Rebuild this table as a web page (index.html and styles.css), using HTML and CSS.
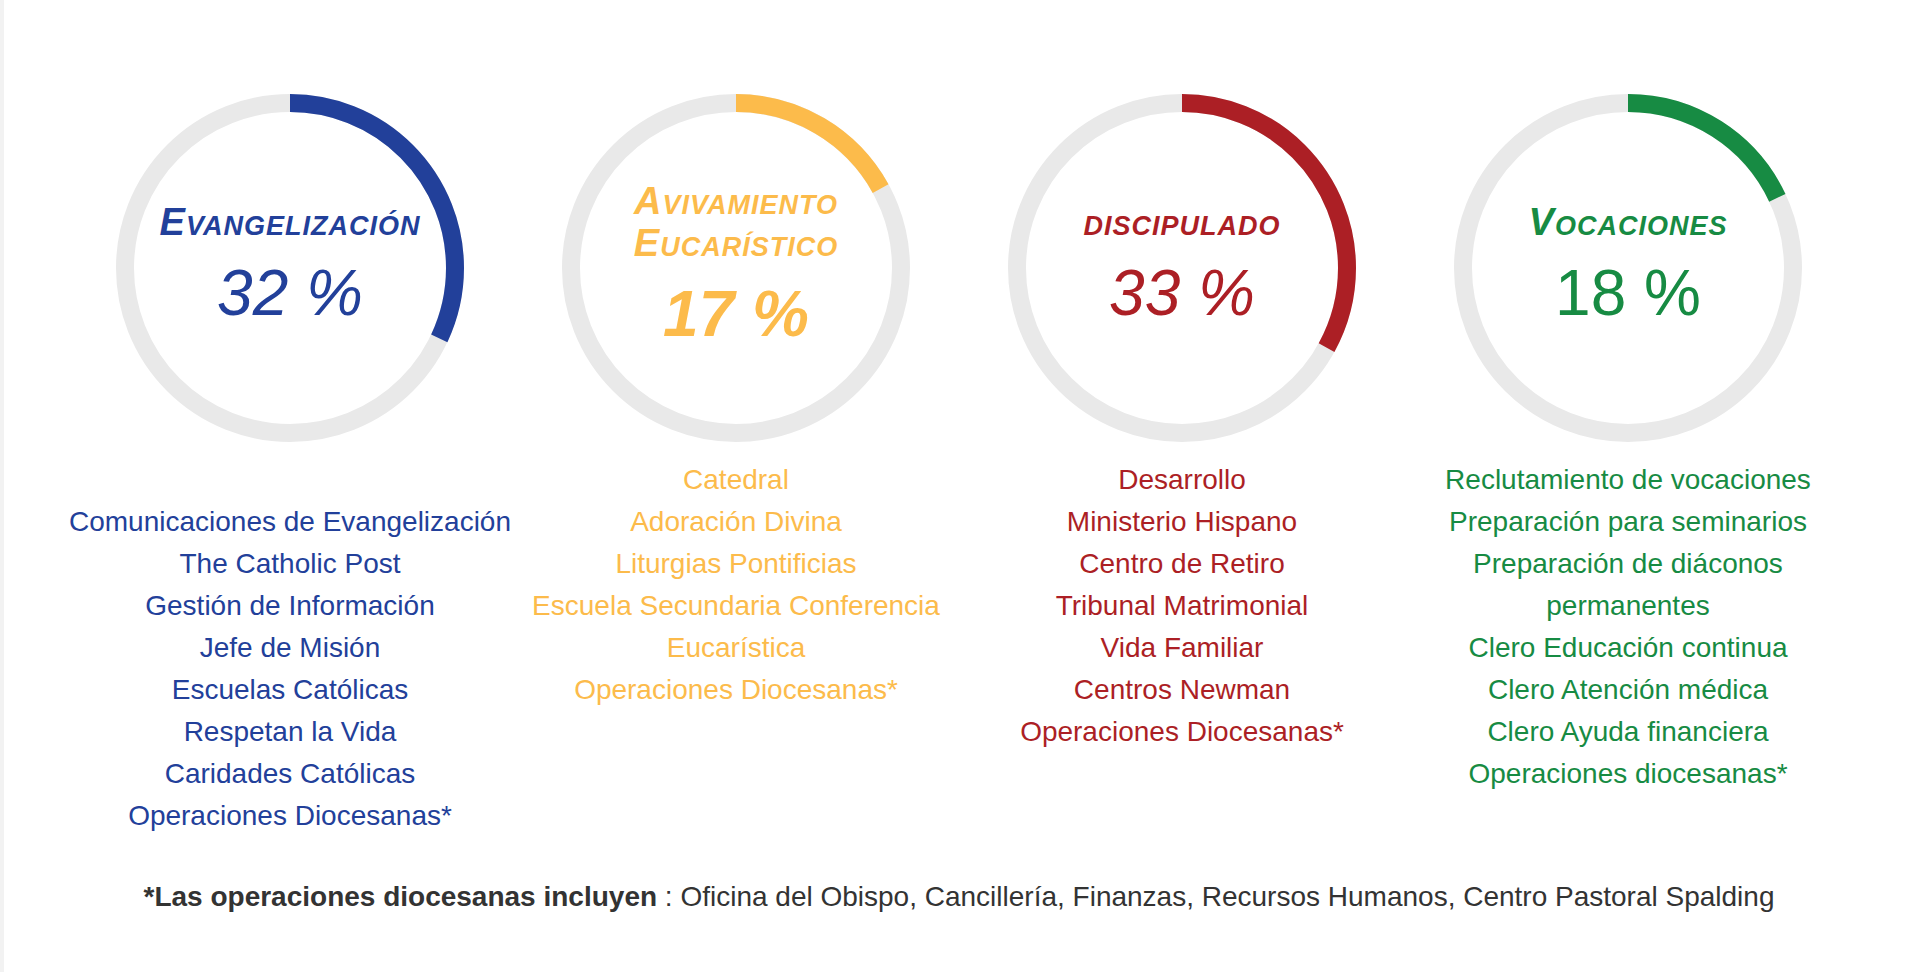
FILE: index.html
```html
<!DOCTYPE html>
<html lang="es">
<head>
<meta charset="utf-8">
<title>Operaciones diocesanas</title>
<link rel="stylesheet" href="styles.css">
</head>
<body>
<div class="page">
  <div class="columns">
    <section class="pillar blue">
      <div class="dial">
        <svg class="ring" viewBox="0 0 348 348"><circle class="track" cx="174" cy="174" r="165"/><circle class="bar" cx="174" cy="174" r="165" stroke-dasharray="331.7 1036.7"/></svg>
        <div class="dial-text">
          <h2 class="title">Evangelización</h2>
          <p class="pct italic">32 %</p>
        </div>
      </div>
      <ul class="units">
        <li>&nbsp;</li>
        <li>Comunicaciones de Evangelización</li>
        <li>The Catholic Post</li>
        <li>Gestión de Información</li>
        <li>Jefe de Misión</li>
        <li>Escuelas Católicas</li>
        <li>Respetan la Vida</li>
        <li>Caridades Católicas</li>
        <li>Operaciones Diocesanas*</li>
      </ul>
    </section>
    <section class="pillar yellow">
      <div class="dial">
        <svg class="ring" viewBox="0 0 348 348"><circle class="track" cx="174" cy="174" r="165"/><circle class="bar" cx="174" cy="174" r="165" stroke-dasharray="176.2 1036.7"/></svg>
        <div class="dial-text">
          <h2 class="title">Avivamiento<br>Eucarístico</h2>
          <p class="pct italic bold">17 %</p>
        </div>
      </div>
      <ul class="units">
        <li>Catedral</li>
        <li>Adoración Divina</li>
        <li>Liturgias Pontificias</li>
        <li>Escuela Secundaria Conferencia Eucarística</li>
        <li>Operaciones Diocesanas*</li>
      </ul>
    </section>
    <section class="pillar red">
      <div class="dial">
        <svg class="ring" viewBox="0 0 348 348"><circle class="track" cx="174" cy="174" r="165"/><circle class="bar" cx="174" cy="174" r="165" stroke-dasharray="342.1 1036.7"/></svg>
        <div class="dial-text">
          <h2 class="title">discipulado</h2>
          <p class="pct italic">33 %</p>
        </div>
      </div>
      <ul class="units">
        <li>Desarrollo</li>
        <li>Ministerio Hispano</li>
        <li>Centro de Retiro</li>
        <li>Tribunal Matrimonial</li>
        <li>Vida Familiar</li>
        <li>Centros Newman</li>
        <li>Operaciones Diocesanas*</li>
      </ul>
    </section>
    <section class="pillar green">
      <div class="dial">
        <svg class="ring" viewBox="0 0 348 348"><circle class="track" cx="174" cy="174" r="165"/><circle class="bar" cx="174" cy="174" r="165" stroke-dasharray="186.6 1036.7"/></svg>
        <div class="dial-text">
          <h2 class="title">Vocaciones</h2>
          <p class="pct">18 %</p>
        </div>
      </div>
      <ul class="units">
        <li>Reclutamiento de vocaciones</li>
        <li>Preparación para seminarios</li>
        <li>Preparación de diáconos permanentes</li>
        <li>Clero Educación continua</li>
        <li>Clero Atención médica</li>
        <li>Clero Ayuda financiera</li>
        <li>Operaciones diocesanas*</li>
      </ul>
    </section>
  </div>
  <p class="note"><b>*Las operaciones diocesanas incluyen</b> : Oficina del Obispo, Cancillería, Finanzas, Recursos Humanos, Centro Pastoral Spalding</p>
</div>
</body>
</html>
```

FILE: styles.css
```css
html, body {
  margin: 0;
  background: #ffffff;
}

body {
  font-family: "Liberation Sans", Arial, Helvetica, sans-serif;
}

.page {
  box-sizing: border-box;
  min-height: 972px;
  border-left: 4px solid #f2f2f2;
  padding: 94px 0 0 63px;
}

.columns {
  display: grid;
  grid-template-columns: repeat(4, 446px);
  width: 1784px;
}

.pillar {
  display: flex;
  flex-direction: column;
  align-items: center;
}

.blue { --c: #22409a; }
.yellow { --c: #fcbb4b; }
.red { --c: #ac1f25; }
.green { --c: #178b43; }

.dial {
  position: relative;
  box-sizing: border-box;
  width: 348px;
  height: 348px;
  padding-bottom: 6px;
  display: flex;
  align-items: center;
  justify-content: center;
  color: var(--c);
}

.ring {
  position: absolute;
  left: 0;
  top: 0;
  width: 348px;
  height: 348px;
  transform: rotate(-90deg);
}

.track {
  fill: none;
  stroke: #e9e9e9;
  stroke-width: 18;
}

.bar {
  fill: none;
  stroke: var(--c);
  stroke-width: 18;
}

.dial-text {
  position: relative;
  max-width: 320px;
  text-align: center;
}

.title {
  margin: 0;
  font-size: 38px;
  line-height: 42px;
  font-weight: bold;
  font-style: italic;
  font-variant: small-caps;
  letter-spacing: 1px;
}

.pct {
  margin: 14px 0 0;
  font-size: 64px;
  line-height: 72px;
  font-weight: normal;
}

.pct.italic { font-style: italic; }
.pct.bold { font-weight: bold; }

.units {
  list-style: none;
  margin: 17px 0 0;
  padding: 0;
  width: 446px;
  font-size: 28px;
  line-height: 42px;
  text-align: center;
  color: var(--c);
}

.note {
  width: 1784px;
  margin: 39px 0 0;
  text-align: center;
  font-size: 28px;
  line-height: 42px;
  color: #333333;
}
```
